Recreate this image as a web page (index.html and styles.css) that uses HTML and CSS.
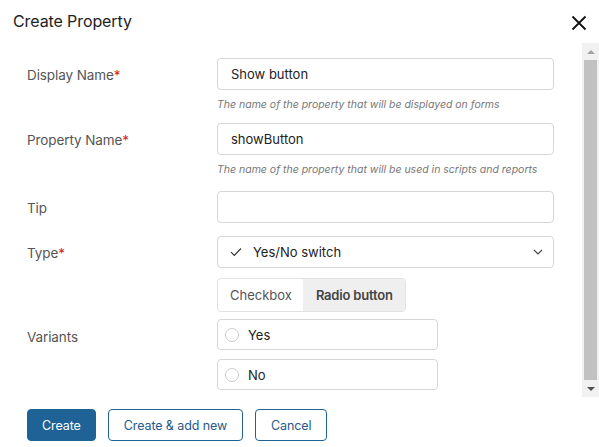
FILE: index.html
```html
<!DOCTYPE html>
<html>
<head>
<meta charset="utf-8">
<link rel="stylesheet" href="styles.css">
</head>
<body>
<div class="dialog">
  <div class="header">
    <div class="title">Create Property</div>
    <svg class="close" width="16" height="16" viewBox="0 0 16 16"><path d="M1.5 1.5 L14.5 14.5 M14.5 1.5 L1.5 14.5" stroke="#111" stroke-width="1.8" fill="none"/></svg>
  </div>
  <div class="main">
    <div class="form">
      <div class="row">
        <div class="label">Display Name<span class="req">*</span></div>
        <div class="field"><div class="input">Show button</div></div>
      </div>
      <div class="hint r1">The name of the property that will be displayed on forms</div>
      <div class="row">
        <div class="label">Property Name<span class="req">*</span></div>
        <div class="field"><div class="input">showButton</div></div>
      </div>
      <div class="hint r2">The name of the property that will be used in scripts and reports</div>
      <div class="row tip">
        <div class="label">Tip</div>
        <div class="field"><div class="input"></div></div>
      </div>
      <div class="row type">
        <div class="label">Type<span class="req">*</span></div>
        <div class="field">
          <div class="input select">
            <svg class="check" width="12" height="10" viewBox="0 0 12 10"><path d="M1 5.2 L4.3 8.5 L11 1.5" stroke="#333" stroke-width="1.1" fill="none"/></svg>
            <span class="sel-text">Yes/No switch</span>
            <svg class="chev" width="10" height="6" viewBox="0 0 10 6"><path d="M1 1 L5 5 L9 1" stroke="#444" stroke-width="1.1" fill="none"/></svg>
          </div>
        </div>
      </div>
      <div class="row variants">
        <div class="label vlabel">Variants</div>
        <div class="field">
          <div class="seg">
            <div class="seg-item">Checkbox</div>
            <div class="seg-item active">Radio button</div>
          </div>
          <div class="opt"><span class="radio"></span>Yes</div>
          <div class="opt"><span class="radio"></span>No</div>
        </div>
      </div>
    </div>
    <div class="scrollbar">
      <div class="arrow up"></div>
      <div class="thumb"></div>
      <div class="arrow down"></div>
    </div>
  </div>
  <div class="footer">
    <button class="btn primary">Create</button>
    <button class="btn">Create &amp; add new</button>
    <button class="btn">Cancel</button>
  </div>
</div>
</body>
</html>
```
FILE: styles.css
```css
html, body {
  margin: 0;
  padding: 0;
  background: #fff;
}
body {
  font-family: Inter, "Noto Sans", sans-serif;
  color: #222;
  width: 599px;
  height: 447px;
  overflow: hidden;
}
.dialog {
  display: flex;
  flex-direction: column;
  height: 447px;
}
.header {
  display: flex;
  justify-content: space-between;
  align-items: center;
  height: 44px;
  padding: 0 12px 0 13px;
  box-sizing: border-box;
}
.title {
  font-size: 16px;
  color: #222;
  margin-top: -3px;
  letter-spacing: -0.1px;
}
.close {
  margin-top: 1px;
}
.main {
  display: flex;
  height: 354px;
}
.form {
  flex: 1;
  padding: 14px 0 0 27px;
  box-sizing: border-box;
}
.row {
  display: flex;
  align-items: center;
}
.label {
  width: 190px;
  font-size: 13.5px;
  color: #555;
  letter-spacing: -0.1px;
  margin-top: 2px;
}
.req {
  color: #e02020;
}
.field {
  width: 337px;
}
.input {
  height: 32px;
  box-sizing: border-box;
  border: 1px solid #d6d6d6;
  border-radius: 4px;
  padding: 0 13px;
  display: flex;
  align-items: center;
  font-size: 13px;
  color: #222;
}
.hint {
  margin-left: 190px;
  font-size: 10.5px;
  font-style: italic;
  color: #777;
  line-height: 14px;
  margin-top: 8px;
}
.hint.r1 { margin-bottom: 11px; }
.hint.r2 { margin-bottom: 14px; }
.row.type { margin-top: 13px; }
.select {
  padding-left: 12px;
  padding-right: 10px;
}
.check { margin-right: 11px; }
.sel-text { flex: 1; }
.row.variants {
  margin-top: 10px;
  align-items: flex-start;
}
.vlabel {
  margin-top: 51px;
}
.seg {
  display: inline-flex;
  border: 1px solid #e2e2e2;
  border-radius: 4px;
  height: 34px;
  box-sizing: border-box;
  overflow: hidden;
  font-size: 13px;
}
.seg-item {
  display: flex;
  align-items: center;
  padding: 0 11px 0 12px;
  color: #555;
}
.seg-item.active {
  background: #efefef;
  font-weight: 600;
  color: #444;
  padding: 0 12px 0 13px;
  letter-spacing: -0.2px;
}
.opt {
  width: 221px;
  height: 31px;
  box-sizing: border-box;
  border: 1px solid #d6d6d6;
  border-radius: 4px;
  display: flex;
  align-items: center;
  padding-left: 7px;
  font-size: 13px;
  color: #222;
  margin-top: 7px;
}
.opt + .opt { margin-top: 9px; }
.radio {
  width: 14px;
  height: 14px;
  box-sizing: border-box;
  border: 1px solid #ccc;
  border-radius: 50%;
  margin-right: 9px;
}
.scrollbar {
  width: 17px;
  margin-top: -1px;
  height: 354px;
  background: #f1f1f1;
  display: flex;
  flex-direction: column;
  align-items: center;
}
.thumb {
  width: 13px;
  flex: 1;
  background: #c1c1c1;
}
.arrow {
  height: 17px;
  width: 17px;
  display: flex;
  align-items: center;
  justify-content: center;
}
.arrow.up::before {
  content: "";
  border-left: 4px solid transparent;
  border-right: 4px solid transparent;
  border-bottom: 4px solid #a3a3a3;
}
.arrow.down::before {
  content: "";
  border-left: 4px solid transparent;
  border-right: 4px solid transparent;
  border-top: 4px solid #505050;
}
.footer {
  display: flex;
  gap: 12px;
  padding: 11px 0 0 27px;
}
.btn {
  height: 32px;
  box-sizing: border-box;
  border: 1px solid #1f6396;
  border-radius: 4px;
  background: #fff;
  color: #26598a;
  font-family: Inter, "Noto Sans", sans-serif;
  font-size: 12.5px;
  letter-spacing: -0.1px;
  padding: 0 15px;
  margin: 0;
}
.btn.primary {
  background: #1f6396;
  color: #fff;
  padding: 0 14px;
}
```
